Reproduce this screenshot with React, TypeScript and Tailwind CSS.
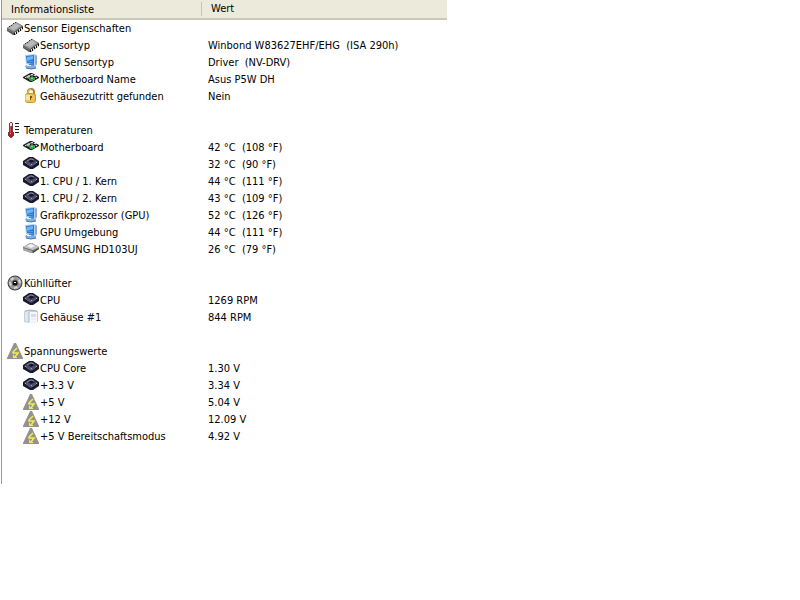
import type { ReactNode } from "react";

type IconName =
  | "chip"
  | "monitor"
  | "board"
  | "lock"
  | "thermometer"
  | "cpu"
  | "disk"
  | "fan"
  | "case"
  | "voltage";

type Item = { icon: IconName; label: string; value: string };
type Group = { icon: IconName; title: string; items: Item[] };

const groups: Group[] = [
  {
    icon: "chip",
    title: "Sensor Eigenschaften",
    items: [
      { icon: "chip", label: "Sensortyp", value: "Winbond W83627EHF/EHG  (ISA 290h)" },
      { icon: "monitor", label: "GPU Sensortyp", value: "Driver  (NV-DRV)" },
      { icon: "board", label: "Motherboard Name", value: "Asus P5W DH" },
      { icon: "lock", label: "Gehäusezutritt gefunden", value: "Nein" },
    ],
  },
  {
    icon: "thermometer",
    title: "Temperaturen",
    items: [
      { icon: "board", label: "Motherboard", value: "42 °C  (108 °F)" },
      { icon: "cpu", label: "CPU", value: "32 °C  (90 °F)" },
      { icon: "cpu", label: "1. CPU / 1. Kern", value: "44 °C  (111 °F)" },
      { icon: "cpu", label: "1. CPU / 2. Kern", value: "43 °C  (109 °F)" },
      { icon: "monitor", label: "Grafikprozessor (GPU)", value: "52 °C  (126 °F)" },
      { icon: "monitor", label: "GPU Umgebung", value: "44 °C  (111 °F)" },
      { icon: "disk", label: "SAMSUNG HD103UJ", value: "26 °C  (79 °F)" },
    ],
  },
  {
    icon: "fan",
    title: "Kühllüfter",
    items: [
      { icon: "cpu", label: "CPU", value: "1269 RPM" },
      { icon: "case", label: "Gehäuse #1", value: "844 RPM" },
    ],
  },
  {
    icon: "voltage",
    title: "Spannungswerte",
    items: [
      { icon: "cpu", label: "CPU Core", value: "1.30 V" },
      { icon: "cpu", label: "+3.3 V", value: "3.34 V" },
      { icon: "voltage", label: "+5 V", value: "5.04 V" },
      { icon: "voltage", label: "+12 V", value: "12.09 V" },
      { icon: "voltage", label: "+5 V Bereitschaftsmodus", value: "4.92 V" },
    ],
  },
];

const drawings: Record<IconName, ReactNode> = {
  chip: (
    <>
      <path d="M0 8 9 2l7 4v3l-8 6H6L0 11z" fill="#5a5a5a" />
      <path d="M0 8 9 2l6 4-8 6z" fill="#9d9d9d" />
      <path d="M2 8 9 3l4 3-6 4z" fill="#b9b9b9" />
      <path d="M2 6h1v1H2zM4 5h1v1H4zM6 3h1v1H6zM8 2h1v1H8z" fill="#333" />
      <path d="M8 12h1v2H8zM10 11h1v2h-1zM12 9h1v2h-1zM14 8h1v2h-1z" fill="#e0e0e0" />
      <path d="M7 13h1v2H7zM9 12h1v2H9zM11 10h1v2h-1zM13 9h1v2h-1zM15 7h1v2h-1z" fill="#111" />
      <path d="m0 9 7 4" stroke="#777" />
    </>
  ),
  monitor: (
    <>
      <path d="m2 1 9-1 3 1v10l-2 1-9-2z" fill="#b7cfea" />
      <path d="m3 2 8-1v9L4 9z" fill="#2779d4" />
      <path d="m4 3 6-1v3L4 7z" fill="#6db7f4" />
      <path d="M5 7h5v1H5z" fill="#4a9ce8" />
      <path d="m12 1 2 1v8l-2 1z" fill="#8aaad2" />
      <path d="M6 10h5v3H6z" fill="#4b82c0" />
      <path d="M2 12q2-2 5-1l6 1v2l-4 1-6-1z" fill="#7fb0e4" />
      <path d="m3 14 5 1 5-1" stroke="#4275b6" fill="none" />
      <path d="M4 11h4v1H4z" fill="#e6f3ff" />
    </>
  ),
  board: (
    <>
      <path d="m0 6 7-4h2l7 4v1l-7 4H7L0 7z" fill="#202020" />
      <path d="m2 6 6-3 6 3-6 4z" fill="#59665b" />
      <path d="m3 6 3-2 2 1-3 2z" fill="#c9d0c9" />
      <path d="M6 7h2V6h3v1h1v2h-2v1H7V9H6z" fill="#22ab43" />
      <path d="M8 3h2v1H8zM11 4h2v1h-2zM2 6h1v1H2zM13 6h1v1h-1z" fill="#ddd" />
      <path d="M7 5h1v1H7zM10 5h2v1h-2zM5 8h1v1H5zM12 7h1v1h-1z" fill="#080808" />
      <path d="M8 7h2v1H8z" fill="#75e27f" />
    </>
  ),
  lock: (
    <>
      <path d="M5 7V4q0-3 3-3t3 3v3" fill="none" stroke="#ad862c" strokeWidth="2" />
      <path d="M5 7V4q0-2 3-3" fill="none" stroke="#ebd27d" />
      <path d="M2 8q0-3 3-3h5q3 0 3 3v4q0 3-4 3H5q-3 0-3-3z" fill="#c8962e" />
      <path d="M2 8q0-2 3-2h4q3 0 3 3v3q0 2-3 2H5q-3 0-3-2z" fill="#edc453" />
      <path d="M3 7h4v5H3z" fill="#fae59b" />
      <path d="M7 8h2v2H8v2H7z" fill="#76541a" />
    </>
  ),
  thermometer: (
    <>
      <path d="M2 1h1V0h2v1h1v9h1v4H6v1H5v1H3v-1H2v-1H1v-4h1z" fill="#6f4042" />
      <path d="M3 1h2v3H3z" fill="#f4eaea" />
      <path d="M3 4h2v6h1v4H5v1H3v-1H2v-4h1z" fill="#c9131a" />
      <path d="M3 4h1v6H3z" fill="#ec4c4c" />
      <path d="M3 11h1v1H3z" fill="#ffb4ae" />
      <path d="M8 1h4v1H8zM8 4h4v1H8zM8 7h4v1H8zM8 10h4v1H8z" fill="#222" />
    </>
  ),
  cpu: (
    <>
      <path d="m0 5 6-4h4l6 4v4l-6 4H7L0 9z" fill="#17172e" />
      <path d="m1 6 6-4h2l6 4-6 4H7z" fill="#4b4d64" />
      <path d="m5 5 3-2 4 2-4 2z" fill="#17172c" />
      <path d="m4 5 4-2 3 1" stroke="#85879b" fill="none" />
      <path d="m3 7 4 3h2l4-3" stroke="#60627a" fill="none" />
      <path d="M2 6h1v1H2zM13 6h1v1h-1zM8 8h1v1H8z" fill="#a3a5b8" />
    </>
  ),
  disk: (
    <>
      <path d="m0 6 7-4h2l7 4v2l-6 4H8L0 9z" fill="#777" />
      <path d="m0 6 8-4 8 4-6 3z" fill="#c4c4c4" />
      <path d="m4 5 4-2 4 2-4 2z" fill="#f3f3f3" />
      <path d="m0 7 9 3v2L0 9z" fill="#a7a7a7" />
      <path d="m10 10 6-3v1l-6 4z" fill="#4b4b4b" />
    </>
  ),
  fan: (
    <>
      <circle cx="8" cy="8" r="7.500" fill="#414141" />
      <circle cx="8" cy="8" r="6.500" fill="#9d9d9d" />
      <path d="M8 8 3 4l3-2zM8 8l5-4 1 4zM8 8l3 5-4 1zM8 8l-5 3-1-4z" fill="#d6d6d6" />
      <circle cx="8" cy="8" r="3.500" fill="#777" />
      <circle cx="8" cy="8" r="2.500" fill="#111" />
      <path d="M7 7h2v1H7z" fill="#fff" />
    </>
  ),
  case: (
    <>
      <path d="m1 2 5-1 9 1v11l-9 1-5-1z" fill="#c4d0dc" />
      <path d="m2 3 4-1v11l-4-1z" fill="#dfe8f0" />
      <path d="M6 3h8v10l-8 1z" fill="#f5f8fb" />
      <path d="M8 5h5v3H8z" fill="#d3dde7" />
      <path d="M6 3v10M2 2l5-1 7 1" stroke="#a5b5c4" fill="none" />
      <path d="M8 10h5" stroke="#dce4ec" />
    </>
  ),
  voltage: (
    <>
      <path d="M7 0h2l7 15v1H0v-1z" fill="#929292" />
      <path d="M10 5 6 9v1h5l-3 4" fill="none" stroke="#f4ed4c" strokeWidth="1.500" />
      <path d="M6 11v4h4v-1H8z" fill="#f4ed4c" />
    </>
  ),
};

function Icon({ name }: { name: IconName }) {
  return (
    <svg viewBox="0 0 16 16" className="size-4 shrink-0" aria-hidden="true">
      {drawings[name]}
    </svg>
  );
}

function ItemRow({ icon, label, value }: Item) {
  return (
    <tr className="h-[17px]">
      <td className="p-0 pl-[21px]">
        <div className="flex h-[17px] items-start gap-px">
          <Icon name={icon} />
          <span>{label}</span>
        </div>
      </td>
      <td className="p-0 pl-[7px] whitespace-pre">{value}</td>
    </tr>
  );
}

function GroupRows({ icon, title, items }: Group) {
  return (
    <tbody className="after:block after:h-[17px] after:content-['']">
      <tr className="h-[17px]">
        <th colSpan={2} scope="rowgroup" className="p-0 pl-[5px] text-left font-normal">
          <div className="flex h-[17px] items-start gap-px">
            <Icon name={icon} />
            <span>{title}</span>
          </div>
        </th>
      </tr>
      {items.map((item) => (
        <ItemRow key={item.label} {...item} />
      ))}
    </tbody>
  );
}

export default function App() {
  return (
    <div className="min-h-screen bg-white font-['DejaVu_Sans_Condensed','DejaVu_Sans',sans-serif] text-[11px] leading-[17px] text-black">
      <div className="w-[56%] min-w-[400px] px-px">
        <main className="border-l border-[#7f9db9] pb-[22px]">
          <table className="w-full table-fixed border-separate border-spacing-0">
            <thead className="bg-[#ebeadb]">
              <tr className="h-5">
                <th
                  scope="col"
                  className="w-[199px] border-b-2 border-[#cbc7b8] p-0 pl-[9px] text-left font-normal"
                >
                  Informationsliste
                </th>
                <th scope="col" className="border-b-2 border-[#cbc7b8] p-0 text-left font-normal">
                  <div className="border-l border-[#c7c5b2] pl-[9px] leading-[14px]">Wert</div>
                </th>
              </tr>
            </thead>
            {groups.map((group) => (
              <GroupRows key={group.title} {...group} />
            ))}
          </table>
        </main>
      </div>
    </div>
  );
}
